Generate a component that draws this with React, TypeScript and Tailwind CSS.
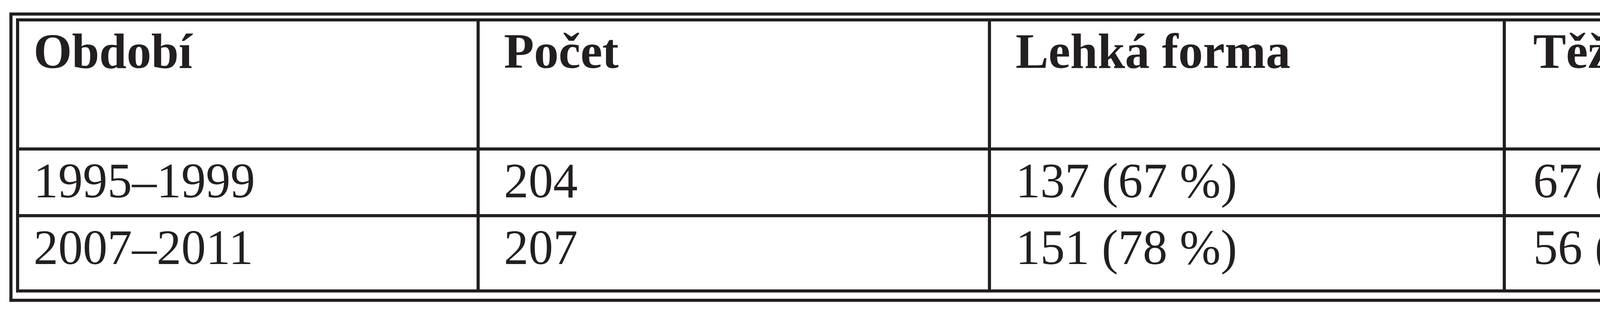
const rows = [
  ["1995–1999", "204", "137 (67 %)", "67 (33 %)", "16 (23 %)"],
  ["2007–2011", "207", "151 (78 %)", "56 (22 %)", "4 (7,9 %)"],
];

// per-column left padding, measured from the reference
const pad = ["pl-[37px]", "pl-[62px]", "pl-[63px]", "pl-[70px]", "pl-[69px]"];

function Cell({
  col,
  row,
  children,
}: {
  col: number;
  row: number;
  children: React.ReactNode;
}) {
  const pt = row === 0 ? "pt-[14px]" : "pt-[15px]";
  return (
    <div
      className={`${pad[col]} ${pt} ${col > 0 ? "border-l-8 border-[#231f20]" : ""} ${
        row > 0 ? "border-t-8 border-[#231f20]" : ""
      }`}
    >
      {children}
    </div>
  );
}

export default function App() {
  return (
    <div
      className="h-[800px] w-[6651px] overflow-hidden bg-white pl-[24px] pt-[32px] text-[126px] leading-[126px] text-[#231f20]"
      style={{ fontFamily: '"Liberation Serif", "Times New Roman", serif' }}
    >
      <div className="w-[6594px] border-8 border-[#231f20] pb-[16px] pl-[9px] pr-[16px] pt-[7px]">
        <div className="grid grid-cols-[1171px_1309px_1318px_1309px_1430px] grid-rows-[323px_171px_193px] border-8 border-[#231f20]">
          <Cell col={0} row={0}>
            <div className="font-bold">Období</div>
          </Cell>
          <Cell col={1} row={0}>
            <div className="font-bold">Počet</div>
          </Cell>
          <Cell col={2} row={0}>
            <div className="font-bold">Lehká forma</div>
          </Cell>
          <Cell col={3} row={0}>
            <div className="font-bold">Těžká forma</div>
          </Cell>
          <Cell col={4} row={0}>
            <div className="font-bold">Exitus</div>
            <div className="mt-[45px]">(% jen z těžké formy)</div>
          </Cell>

          {rows.map((r, ri) =>
            r.map((v, ci) => (
              <Cell key={`${ri}-${ci}`} col={ci} row={ri + 1}>
                {v}
              </Cell>
            ))
          )}
        </div>
      </div>
    </div>
  );
}
